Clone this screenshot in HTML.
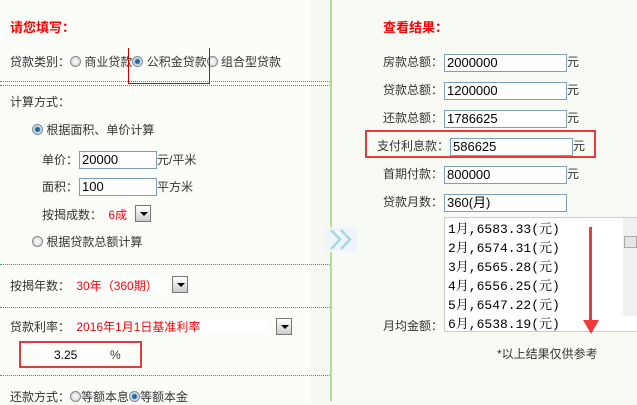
<!DOCTYPE html>
<html><head><meta charset="utf-8"><style>
*{margin:0;padding:0;box-sizing:border-box}
body{width:637px;height:401px;overflow:hidden;background:#f7faf3;font-family:"Liberation Sans","Noto Sans CJK SC",sans-serif;font-size:12px;color:#333;position:relative}
.a{position:absolute;white-space:nowrap;line-height:16px}
.red{color:#f00}
.h{font-weight:bold;font-size:13px;color:#f00}
.dot{position:absolute;left:0;width:330px;border-top:1px dotted #2a9a8a}
.in{position:absolute;height:18px;border:1px solid #7f9db9;background:#fff;font-size:13px;line-height:16px;padding-left:2px;color:#000}
.rad{display:inline-block;width:11px;height:11px;border-radius:50%;border:1px solid #888;background:radial-gradient(#fff,#ccc);vertical-align:-1px}
.rad.on{background:radial-gradient(#1a6aa0 30%,#cde 50%)}
.dd{position:absolute;width:16px;height:17px;border:1px solid #777;background:linear-gradient(#fff,#ccc)}
.dd:after{content:"";position:absolute;left:4px;top:6px;border:4px solid transparent;border-top:4px solid #000}
.rbox{position:absolute;border:2px solid #e83a3a}
</style></head><body>
<div style="position:absolute;left:0;top:0;width:310px;height:401px;background:#fbfdf9"></div>
<div style="position:absolute;left:330px;top:0;width:2px;height:401px;background:#b8dc8c"></div>
<div style="position:absolute;left:332px;top:0;width:305px;height:401px;background:#f8fbf4"></div>

<div class="a h" style="left:10px;top:20px">请您填写：</div>
<div class="a" style="left:10px;top:54px">贷款类别：<span class="rad"></span> 商业贷款<span class="rad on"></span> 公积金贷款<span class="rad"></span> 组合型贷款</div>
<div style="position:absolute;left:128px;top:48px;width:82px;height:36px;border:1px solid #c00;border-top:none"></div>
<div class="dot" style="top:81px"></div><div class="dot" style="top:85px"></div>
<div class="a" style="left:10px;top:94px">计算方式：</div>
<div class="a" style="left:32px;top:122px"><span class="rad on"></span> 根据面积、单价计算</div>
<div class="a" style="left:42px;top:152px">单价：</div>
<div class="in" style="left:79px;top:151px;width:78px">20000</div>
<div class="a" style="left:157px;top:152px">元/平米</div>
<div class="a" style="left:42px;top:179px">面积：</div>
<div class="in" style="left:79px;top:178px;width:78px">100</div>
<div class="a" style="left:157px;top:179px">平方米</div>
<div class="a" style="left:42px;top:207px">按揭成数： <span class="red" style="background:#fff;padding:0 3px">6成</span></div>
<div class="dd" style="left:135px;top:205px"></div>
<div class="a" style="left:32px;top:234px"><span class="rad"></span> 根据贷款总额计算</div>
<div class="dot" style="top:264px"></div>
<div class="a" style="left:10px;top:278px">按揭年数： <span class="red" style="background:#fff;padding:0 3px">30年（360期）</span></div>
<div class="dd" style="left:172px;top:276px"></div>
<div class="dot" style="top:307px"></div>
<div class="a" style="left:10px;top:319px">贷款利率： <span class="red" style="background:#fff;padding:0 70px 0 3px">2016年1月1日基准利率</span></div>
<div class="dd" style="left:276px;top:318px"></div>
<div class="rbox" style="left:19px;top:341px;width:123px;height:27px"></div>
<div class="a" style="left:40px;top:347px;width:66px;background:#fff;padding-left:14px;color:#000">3.25</div>
<div class="a" style="left:110px;top:347px">%</div>
<div class="dot" style="top:375px"></div>
<div class="a" style="left:10px;top:389px">还款方式：<span class="rad"></span>等额本息<span class="rad on"></span>等额本金</div>

<svg style="position:absolute;left:324px;top:227px" width="33" height="25"><rect width="33" height="25" fill="#eef6fb"/><path d="M7 3 L16 12.5 L7 22 M17 3 L26 12.5 L17 22" fill="none" stroke="#a8d8d8" stroke-width="2.5"/></svg>

<div class="a h" style="left:383px;top:20px">查看结果：</div>
<div class="a" style="left:383px;top:54px">房款总额：</div><div class="in" style="left:444px;top:54px;width:123px">2000000</div><div class="a" style="left:567px;top:54px">元</div>
<div class="a" style="left:383px;top:82px">贷款总额：</div><div class="in" style="left:444px;top:82px;width:123px">1200000</div><div class="a" style="left:567px;top:82px">元</div>
<div class="a" style="left:383px;top:110px">还款总额：</div><div class="in" style="left:444px;top:110px;width:123px">1786625</div><div class="a" style="left:567px;top:110px">元</div>
<div class="rbox" style="left:365px;top:130px;width:231px;height:28px"></div>
<div class="a" style="left:377px;top:138px">支付利息款：</div><div class="in" style="left:450px;top:138px;width:123px">586625</div><div class="a" style="left:573px;top:138px">元</div>
<div class="a" style="left:383px;top:166px">首期付款：</div><div class="in" style="left:444px;top:166px;width:123px">800000</div><div class="a" style="left:567px;top:166px">元</div>
<div class="a" style="left:383px;top:194px">贷款月数：</div><div class="in" style="left:444px;top:194px;width:123px">360(月)</div>
<div style="position:absolute;left:444px;top:217px;width:200px;height:115px;border:1px solid #ccc;background:#fff;font-family:'Liberation Mono','Noto Serif CJK SC',monospace;font-size:13px;line-height:19px;padding:2px 0 0 3px;color:#000;overflow:hidden">1月,6583.33(元)<br>2月,6574.31(元)<br>3月,6565.28(元)<br>4月,6556.25(元)<br>5月,6547.22(元)<br>6月,6538.19(元)</div>
<div style="position:absolute;left:623px;top:218px;width:14px;height:98px;background:#f0f0f0"></div>
<div style="position:absolute;left:624px;top:236px;width:13px;height:12px;background:#e4e4e4;border:1px solid #aaa"></div>
<div class="a" style="left:383px;top:318px">月均金额：</div>
<div style="position:absolute;left:589px;top:227px;width:3px;height:96px;background:#f03a3a"></div>
<div style="position:absolute;left:583px;top:320px;border:8px solid transparent;border-top:14px solid #f03a3a"></div>
<div class="a" style="left:497px;top:346px">*以上结果仅供参考</div>
</body></html>
